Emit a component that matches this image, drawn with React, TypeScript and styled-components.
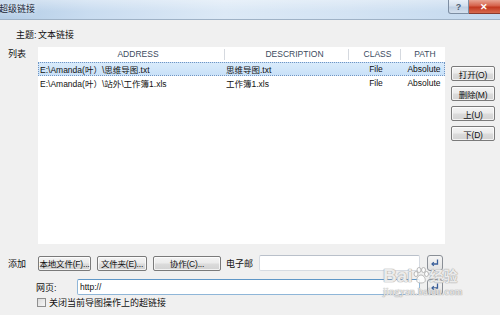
import React from "react";
import styled, { createGlobalStyle } from "styled-components";

const Global = createGlobalStyle`
  html, body { margin: 0; padding: 0; background: #f0f0f0; }
  body { font-family: "Liberation Sans", "Noto Sans CJK SC", sans-serif; }
  * { box-sizing: border-box; }
`;

const Window = styled.div`
  position: relative;
  width: 500px;
  height: 315px;
  overflow: hidden;
  background: #f0f0f0;
  display: flex;
  flex-direction: column;
  font-size: 9px;
  color: #111;
`;

const TitleBar = styled.div`
  height: 20px;
  flex: none;
  display: flex;
  align-items: flex-start;
  background:
    linear-gradient(180deg, rgba(255,255,255,0.35) 0%, rgba(255,255,255,0) 60%),
    linear-gradient(90deg, #b4cde6 0%, #c9dcf0 18%, #dce9f6 45%, #d3e3f3 70%, #c3d8ee 100%);
  border-bottom: 1px solid #9fb2c6;
`;

const Title = styled.div`
  height: 19px;
  line-height: 19px;
  font-size: 9px;
  color: #1a2636;
  text-shadow: 0 0 5px rgba(255,255,255,0.9);
  margin-left: -1px;
`;

const Caption = styled.div`
  margin-left: auto;
  display: flex;
  margin-right: -10px;
`;

const CapBtn = styled.div<{ $close?: boolean }>`
  width: ${(p) => (p.$close ? 41 : 21)}px;
  height: 14px;
  display: flex;
  align-items: center;
  justify-content: center;
  border: 1px solid ${(p) => (p.$close ? "#8a3a2e" : "#7d8ea3")};
  border-top: none;
  border-left-width: ${(p) => (p.$close ? 0 : 1)}px;
  border-radius: ${(p) => (p.$close ? "0" : "0 0 0 3px")};
  background: ${(p) =>
    p.$close
      ? "linear-gradient(180deg, #e8a493 0%, #d5614a 45%, #c2381f 55%, #d66a4f 100%)"
      : "linear-gradient(180deg, #e9f0f8 0%, #d3dfed 45%, #bfcfe2 55%, #d4e0ee 100%)"};
  color: ${(p) => (p.$close ? "#fff" : "#4f5f73")};
  font-size: 9px;
  font-weight: bold;
  padding-right: ${(p) => (p.$close ? 10 : 0)}px;
`;

const Body = styled.div`
  flex: 1;
  display: flex;
  flex-direction: column;
  padding-left: 8px;
`;

const SubjectRow = styled.div`
  height: 27px;
  display: flex;
  align-items: center;
  padding-top: 1px;
`;

const SubjectLabel = styled.div`
  width: 30px;
  padding-left: 8px;
`;

const ListSection = styled.div`
  display: flex;
  height: 197px;
`;

const SideLabel = styled.div`
  width: 30px;
  flex: none;
`;

const ListBox = styled.div`
  width: 407px;
  background: #fff;
  display: flex;
  flex-direction: column;
`;

const Grid = styled.div`
  display: grid;
  grid-template-columns: 187px 124px 52px 44px;
`;

const HeaderRow = styled(Grid)`
  height: 15px;
  align-items: center;
`;

const HeadCell = styled.div<{ $sep?: boolean; $shift?: number }>`
  text-align: center;
  font-size: 8.5px;
  color: #3b4a60;
  padding-left: ${(p) => p.$shift ?? 0}px;
  border-right: ${(p) => (p.$sep ? "1px solid #d5d9df" : "none")};
  height: 11px;
  line-height: 11px;
`;

const Row = styled(Grid)<{ $selected?: boolean }>`
  height: 14px;
  align-items: center;
  font-size: 8.5px;
  border: 1px ${(p) => (p.$selected ? "dotted #6f95c4" : "solid transparent")};
  background: ${(p) =>
    p.$selected ? "linear-gradient(180deg, #d9ebfb 0%, #c9e1f8 100%)" : "transparent"};
`;

const Cell = styled.div<{ $center?: boolean; $pad?: number }>`
  white-space: nowrap;
  overflow: hidden;
  text-align: ${(p) => (p.$center ? "center" : "left")};
  padding-left: ${(p) => p.$pad ?? 0}px;
`;

const ButtonCol = styled.div`
  margin-left: 6px;
  width: 44px;
  display: flex;
  flex-direction: column;
  gap: 5px;
  padding-top: 19px;
`;

const Btn = styled.div<{ $w?: number }>`
  width: ${(p) => (p.$w ? `${p.$w}px` : "100%")};
  height: 15px;
  flex: none;
  display: flex;
  align-items: center;
  justify-content: center;
  border: 1px solid #7a7a7a;
  border-radius: 2px;
  background: linear-gradient(180deg, #f4f4f4 0%, #ebebeb 48%, #dcdcdc 52%, #d2d2d2 100%);
  box-shadow: inset 0 0 0 1px rgba(255,255,255,0.7);
  font-size: 8.5px;
  color: #111;
  white-space: nowrap;
  letter-spacing: -0.2px;
`;

const AddRow = styled.div`
  margin-top: 11px;
  height: 16px;
  display: flex;
  align-items: center;
`;

const Gap = styled.div<{ $w: number }>`
  width: ${(p) => p.$w}px;
  flex: none;
`;

const FieldLabel = styled.div<{ $w: number; $pad?: number }>`
  width: ${(p) => p.$w}px;
  padding-left: ${(p) => p.$pad ?? 0}px;
  flex: none;
  white-space: nowrap;
`;

const Input = styled.div<{ $w: number; $focus?: boolean }>`
  width: ${(p) => p.$w}px;
  height: 16px;
  background: #fff;
  border: 1px solid ${(p) => (p.$focus ? "#8fb6d8" : "#d6dbe2")};
  border-top-color: ${(p) => (p.$focus ? "#5f97c7" : "#b9c0ca")};
  border-radius: 2px;
  padding-left: 2px;
  display: flex;
  align-items: center;
  font-size: 8.5px;
`;

const EnterBtn = styled.div`
  margin-left: 7px;
  width: 16px;
  height: 16px;
  flex: none;
  border: 1px solid #8a8f96;
  border-radius: 3px;
  background: linear-gradient(180deg, #f5f5f5 0%, #e2e2e2 100%);
  display: flex;
  align-items: center;
  justify-content: center;
`;

const UrlRow = styled.div`
  margin-top: 8px;
  height: 16px;
  display: flex;
  align-items: center;
`;

const CheckRow = styled.div`
  margin-top: 2px;
  height: 11px;
  display: flex;
  align-items: center;
  padding-left: 29px;
`;

const CheckBox = styled.div`
  width: 9px;
  height: 9px;
  border: 1px solid #8f8f8f;
  background: linear-gradient(135deg, #dcdcdc 0%, #f6f6f6 100%);
  margin-right: 3px;
`;

const Watermark = styled.div`
  position: absolute;
  left: 383px;
  top: 266px;
  pointer-events: none;
  color: rgba(255, 255, 255, 0.8);
  text-shadow: 0 0 1px #a8a8a8, 0 0 1px #a8a8a8, 0 0 1px #a8a8a8;
`;

const WmTop = styled.div`
  display: flex;
  align-items: center;
  font-family: "Liberation Sans", "Noto Sans CJK SC", sans-serif;
  font-size: 19px;
  font-weight: bold;
  line-height: 20px;
`;

const WmCn = styled.span`
  font-size: 14px;
  margin-left: 1px;
`;

const WmBottom = styled.div`
  font-family: "Liberation Serif", serif;
  font-size: 10px;
  line-height: 12px;
  letter-spacing: 0.3px;
`;

const EnterIcon = () => (
  <svg width="10" height="10" viewBox="0 0 10 10">
    <path d="M7.5 1.5 V6 H2.5" fill="none" stroke="#3a5f9a" strokeWidth="1.3" />
    <path d="M3.8 4.3 L2 6 L3.8 7.7" fill="none" stroke="#3a5f9a" strokeWidth="1.2" />
  </svg>
);

const Paw = () => (
  <svg width="16" height="18" viewBox="0 0 16 18">
    <g fill="rgba(255,255,255,0.8)" stroke="#a8a8a8" strokeWidth="0.8">
      <ellipse cx="3" cy="7" rx="2" ry="2.5" />
      <ellipse cx="6" cy="3" rx="2" ry="2.5" />
      <ellipse cx="10.5" cy="3" rx="2" ry="2.5" />
      <ellipse cx="13.5" cy="7" rx="2" ry="2.5" />
      <path d="M8 8 C5 8 3 12 4 14.5 C5 16.5 11 16.5 12 14.5 C13 12 11 8 8 8 Z" />
    </g>
  </svg>
);

const rows = [
  { addr: "E:\\Amanda(叶）\\思维导图.txt", desc: "思维导图.txt", cls: "File", path: "Absolute", sel: true },
  { addr: "E:\\Amanda(叶）\\站外\\工作簿1.xls", desc: "工作簿1.xls", cls: "File", path: "Absolute", sel: false },
];

export default function App() {
  return (
    <>
      <Global />
      <Window>
        <TitleBar>
          <Title>超级链接</Title>
          <Caption>
            <CapBtn>?</CapBtn>
            <CapBtn $close>✕</CapBtn>
          </Caption>
        </TitleBar>
        <Body>
          <SubjectRow>
            <SubjectLabel>主题:</SubjectLabel>
            <span>文本链接</span>
          </SubjectRow>
          <ListSection>
            <SideLabel>列表</SideLabel>
            <ListBox>
              <HeaderRow>
                <HeadCell $sep $shift={14}>ADDRESS</HeadCell>
                <HeadCell $sep $shift={16}>DESCRIPTION</HeadCell>
                <HeadCell $sep $shift={6}>CLASS</HeadCell>
                <HeadCell $shift={4}>PATH</HeadCell>
              </HeaderRow>
              {rows.map((r) => (
                <Row key={r.addr} $selected={r.sel}>
                  <Cell $pad={1}>{r.addr}</Cell>
                  <Cell>{r.desc}</Cell>
                  <Cell $center>{r.cls}</Cell>
                  <Cell $center>{r.path}</Cell>
                </Row>
              ))}
            </ListBox>
            <ButtonCol>
              <Btn>打开(O)</Btn>
              <Btn>删除(M)</Btn>
              <Btn>上(U)</Btn>
              <Btn>下(D)</Btn>
            </ButtonCol>
          </ListSection>
          <AddRow>
            <SideLabel>添加</SideLabel>
            <Btn $w={53}>本地文件(F)...</Btn>
            <Gap $w={6} />
            <Btn $w={50}>文件夹(E)...</Btn>
            <Gap $w={6} />
            <Btn $w={68}>协作(C)...</Btn>
            <FieldLabel $w={38} $pad={5}>电子邮</FieldLabel>
            <Input $w={161} />
            <EnterBtn>
              <EnterIcon />
            </EnterBtn>
          </AddRow>
          <UrlRow>
            <FieldLabel $w={69} $pad={28}>网页:</FieldLabel>
            <Input $w={343} $focus>http://</Input>
            <EnterBtn>
              <EnterIcon />
            </EnterBtn>
          </UrlRow>
          <CheckRow>
            <CheckBox />
            <span>关闭当前导图操作上的超链接</span>
          </CheckRow>
        </Body>
        <Watermark>
          <WmTop>
            Bai
            <Paw />
            <WmCn>经验</WmCn>
          </WmTop>
          <WmBottom>jingyan.baidu.com</WmBottom>
        </Watermark>
      </Window>
    </>
  );
}
